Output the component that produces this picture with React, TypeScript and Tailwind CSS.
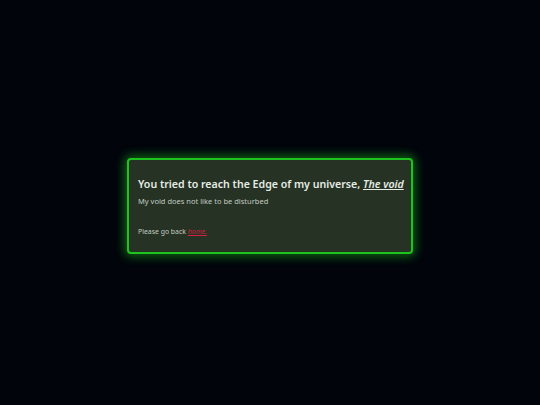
export default function App() {
  return (
    <div className="w-[540px] h-[405px] bg-[#01040b] flex items-center justify-center font-['Noto_Sans',sans-serif]">
      <div className="w-[286px] h-[96px] mt-[6px] rounded-[4px] border-2 border-[#1ec41e] bg-[#253224] shadow-[0_0_10px_3px_rgba(30,200,30,0.45)] pt-[16px] px-[9px]">
        <h1 className="text-[#e6ece4] text-[10.6px] font-semibold leading-[16px] whitespace-nowrap">
          You tried to reach the Edge of my universe,{' '}
          <span className="italic underline">The void</span>
        </h1>
        <p className="text-[#c4cbc2] text-[7.5px] leading-[12px] mt-[3px]">My void does not like to be disturbed</p>
        <p className="text-[#c4cbc2] text-[6.9px] leading-[10px] mt-[20px]">
          Please go back{' '}
          <a href="#" className="text-[#d42040] italic underline">home.</a>
        </p>
      </div>
    </div>
  );
}
